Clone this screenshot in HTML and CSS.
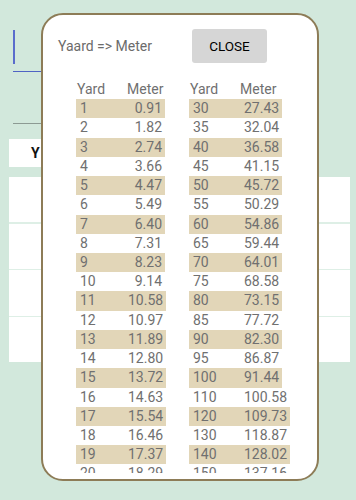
FILE: index.html
```html
<!DOCTYPE html>
<html lang="en">
<head>
  <meta charset="UTF-8" />
  <meta name="viewport" content="width=device-width, initial-scale=1.0"/>
  <title>Yard to Meter</title>
  <link rel="stylesheet" href="styles.css">
</head>
<body>
  <div class="screen">
    <div class="field"><span class="caret"></span></div>
    <div class="rule"></div>
    <div class="list-head"><span>Yard</span></div>
    <div class="cards">
      <div class="card"></div>
      <div class="card"></div>
      <div class="card"></div>
      <div class="card"></div>
    </div>
  </div>

  <div class="dialog">
    <div class="dialog-head">
      <span class="dialog-title">Yaard =&gt; Meter</span>
      <button class="close">CLOSE</button>
    </div>

    <div class="tables">
      <div class="table table-left">
        <div class="th"><span class="h-yd">Yard</span><span>Meter</span></div>
        <div class="tr odd"><span class="yd">1</span><span class="mt">0.91</span></div>
        <div class="tr"><span class="yd">2</span><span class="mt">1.82</span></div>
        <div class="tr odd"><span class="yd">3</span><span class="mt">2.74</span></div>
        <div class="tr"><span class="yd">4</span><span class="mt">3.66</span></div>
        <div class="tr odd"><span class="yd">5</span><span class="mt">4.47</span></div>
        <div class="tr"><span class="yd">6</span><span class="mt">5.49</span></div>
        <div class="tr odd"><span class="yd">7</span><span class="mt">6.40</span></div>
        <div class="tr"><span class="yd">8</span><span class="mt">7.31</span></div>
        <div class="tr odd"><span class="yd">9</span><span class="mt">8.23</span></div>
        <div class="tr"><span class="yd">10</span><span class="mt">9.14</span></div>
        <div class="tr odd"><span class="yd">11</span><span class="mt">10.58</span></div>
        <div class="tr"><span class="yd">12</span><span class="mt">10.97</span></div>
        <div class="tr odd"><span class="yd">13</span><span class="mt">11.89</span></div>
        <div class="tr"><span class="yd">14</span><span class="mt">12.80</span></div>
        <div class="tr odd"><span class="yd">15</span><span class="mt">13.72</span></div>
        <div class="tr"><span class="yd">16</span><span class="mt">14.63</span></div>
        <div class="tr odd"><span class="yd">17</span><span class="mt">15.54</span></div>
        <div class="tr"><span class="yd">18</span><span class="mt">16.46</span></div>
        <div class="tr odd"><span class="yd">19</span><span class="mt">17.37</span></div>
        <div class="tr"><span class="yd">20</span><span class="mt">18.29</span></div>
        <div class="tr odd"><span class="yd">21</span><span class="mt">19.20</span></div>
        <div class="tr"><span class="yd">22</span><span class="mt">20.12</span></div>
        <div class="tr odd"><span class="yd">23</span><span class="mt">21.03</span></div>
      </div>

      <div class="table table-right">
        <div class="th"><span class="h-yd">Yard</span><span>Meter</span></div>
        <div class="tr odd"><span class="yd">30</span><span class="mt">27.43</span></div>
        <div class="tr"><span class="yd">35</span><span class="mt">32.04</span></div>
        <div class="tr odd"><span class="yd">40</span><span class="mt">36.58</span></div>
        <div class="tr"><span class="yd">45</span><span class="mt">41.15</span></div>
        <div class="tr odd"><span class="yd">50</span><span class="mt">45.72</span></div>
        <div class="tr"><span class="yd">55</span><span class="mt">50.29</span></div>
        <div class="tr odd"><span class="yd">60</span><span class="mt">54.86</span></div>
        <div class="tr"><span class="yd">65</span><span class="mt">59.44</span></div>
        <div class="tr odd"><span class="yd">70</span><span class="mt">64.01</span></div>
        <div class="tr"><span class="yd">75</span><span class="mt">68.58</span></div>
        <div class="tr odd"><span class="yd">80</span><span class="mt">73.15</span></div>
        <div class="tr"><span class="yd">85</span><span class="mt">77.72</span></div>
        <div class="tr odd"><span class="yd">90</span><span class="mt">82.30</span></div>
        <div class="tr"><span class="yd">95</span><span class="mt">86.87</span></div>
        <div class="tr odd"><span class="yd">100</span><span class="mt">91.44</span></div>
        <div class="tr"><span class="yd">110</span><span class="mt">100.58</span></div>
        <div class="tr odd"><span class="yd">120</span><span class="mt">109.73</span></div>
        <div class="tr"><span class="yd">130</span><span class="mt">118.87</span></div>
        <div class="tr odd"><span class="yd">140</span><span class="mt">128.02</span></div>
        <div class="tr"><span class="yd">150</span><span class="mt">137.16</span></div>
        <div class="tr odd"><span class="yd">160</span><span class="mt">146.30</span></div>
        <div class="tr"><span class="yd">170</span><span class="mt">155.45</span></div>
        <div class="tr odd"><span class="yd">180</span><span class="mt">164.59</span></div>
      </div>
    </div>
  </div>
</body>
</html>
```

FILE: styles.css
```css
:root {
  --mint-bg: #d2e8dc;
  --mint-line: #deefe6;
  --sand: #e2d6b8;
  --frame: #8d7c57;
  --grey-text: #707070;
}
* {
  box-sizing: border-box;
}
body {
  margin: 0;
  background: var(--mint-bg);
  font-family: Roboto, "Noto Sans", sans-serif;
}

/* page behind the dialog */
.screen {
  padding-top: 30px;
}
.field {
  margin-left: 13px;
  width: 260px;
  height: 42px;
  border-bottom: 1.5px solid #4f63c4;
}
.caret {
  display: block;
  width: 1.5px;
  height: 34px;
  background: #5a6dcc;
}
.rule {
  margin: 51px 0 0 13px;
  width: 260px;
  height: 1px;
  background: #8c9a93;
}
.list-head {
  margin: 15px 0 0 9px;
  width: 280px;
  height: 28px;
  background: white;
  padding-left: 22px;
  display: flex;
  align-items: center;
  font-size: 14px;
  font-weight: bold;
  letter-spacing: 2px;
  color: #111;
}
.cards {
  margin: 10px 6px 0 9px;
  display: flex;
  flex-direction: column;
  gap: 1.4px;
  background: var(--mint-line);
}
.card {
  height: 45.3px;
  background: white;
}

/* dialog */
.dialog {
  position: absolute;
  left: 41px;
  top: 13px;
  width: 278px;
  height: 468px;
  background: white;
  border: 2px solid var(--frame);
  border-radius: 22px;
  padding: 14px 0 6px 0;
  display: flex;
  flex-direction: column;
}
.dialog-head {
  display: flex;
  align-items: center;
  height: 34px;
  padding-left: 15px;
}
.dialog-title {
  font-size: 14px;
  color: #6b6b6b;
}
.close {
  margin-left: auto;
  margin-right: 50px;
  width: 75px;
  height: 34px;
  border: none;
  border-radius: 3px;
  background: #d6d6d6;
  font-family: Roboto, sans-serif;
  font-size: 13.5px;
  font-weight: normal;
  color: #000;
  padding: 0;
}
.tables {
  flex: 1;
  margin-top: 17px;
  overflow: hidden;
  display: flex;
  padding-left: 33px;
  font-size: 14px;
  color: var(--grey-text);
}
.table-left {
  width: 113px;
}
.th,
.tr {
  display: flex;
  height: 19.22px;
  line-height: 19.22px;
  white-space: nowrap;
}
.th {
  padding-left: 1px;
}
.h-yd {
  width: 50px;
}
.tr {
  width: max-content;
  padding: 0 3px 0 4px;
}
.tr.odd {
  background: var(--sand);
}
.yd {
  width: 48px;
}
.table-right .yd {
  width: 51px;
}
.mt {
  min-width: 34px;
  text-align: right;
}
```
